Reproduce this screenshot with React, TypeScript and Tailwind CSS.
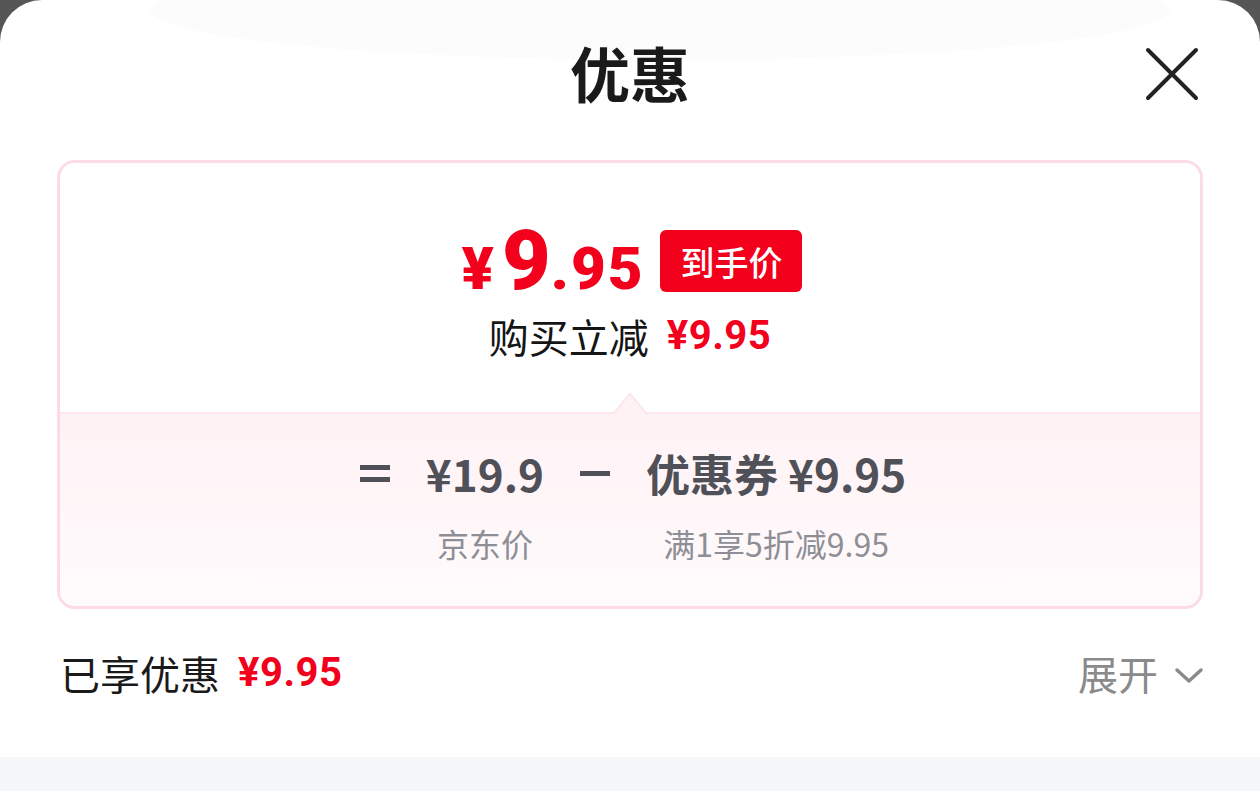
const cjk = "font-['Noto_Sans_CJK_SC','Noto_Sans',sans-serif]"
const num = "font-['Roboto','Noto_Sans_CJK_SC',sans-serif]"

function PriceHead() {
  return (
    <div className="flex flex-col items-center pt-[62px]">
      <div className="flex items-center gap-[16px] h-[72px] pl-[4px]">
        <div className={`flex items-baseline text-[#f2001c] font-black leading-none ${num}`}>
          <span className="text-[60px] mr-[8px]">¥</span>
          <span className="text-[84px]">9</span>
          <span className="text-[60px] tracking-[2px]">.95</span>
        </div>
        <div className="bg-[#f2001c] text-white rounded-[6px] h-[62px] w-[142px] flex items-center justify-center text-[34px] font-medium">
          到手价
        </div>
      </div>
      <div className="flex items-center gap-[18px] mt-[15px] h-[48px]">
        <span className="text-[40px] text-[#151515]">购买立减</span>
        <span className={`text-[40px] font-bold text-[#f2001c] tracking-[0.5px] ${num}`}>¥9.95</span>
      </div>
    </div>
  )
}

function Breakdown() {
  return (
    <div className="relative flex-1 border-t-2 border-[#fde6ec] bg-gradient-to-b from-[#fff2f5] to-[#fffbfc]">
      {/* notch */}
      <div className="absolute left-[553px] -top-[22px] w-0 h-0 border-l-[17px] border-r-[17px] border-b-[21px] border-l-transparent border-r-transparent border-b-[#fde6ec]" />
      <div className="absolute left-[555px] -top-[19px] w-0 h-0 border-l-[15px] border-r-[15px] border-b-[19px] border-l-transparent border-r-transparent border-b-[#fff2f5]" />
      <div className="flex justify-center pt-[32px] pl-[6px] text-[#4f5058]">
        <div className="flex items-start">
          <div className="w-[66px] h-[54px] flex items-center">
            <div className="w-[30px] flex flex-col gap-[7px]">
              <div className="h-[5px] bg-[#4f5058]" />
              <div className="h-[5px] bg-[#4f5058]" />
            </div>
          </div>
          <div className="flex flex-col items-center">
            <span className="text-[44px] font-semibold leading-[54px]">¥19.9</span>
            <span className="text-[32px] text-[#8e8f96] mt-[23px] leading-[40px]">京东价</span>
          </div>
          <div className="w-[102px] h-[54px] flex items-center justify-center">
            <div className="w-[30px] h-[5px] bg-[#4f5058]" />
          </div>
          <div className="flex flex-col items-center">
            <span className="text-[44px] font-semibold leading-[54px]">优惠券 ¥9.95</span>
            <span className="text-[32px] text-[#8e8f96] mt-[23px] leading-[40px]">满1享5折减9.95</span>
          </div>
        </div>
      </div>
    </div>
  )
}

export default function App() {
  return (
    <div className={`w-[1260px] h-[791px] bg-[#565656] ${cjk} overflow-hidden`}>
      <div className="relative h-full bg-white rounded-t-[42px] overflow-hidden flex flex-col">
        <div className="absolute left-[150px] right-[90px] -top-[40px] h-[100px] rounded-[50%] bg-[#fcfcfc]" />
        <div className="relative h-[160px] flex items-start justify-center pt-[33px]">
          <h1 className="text-[60px] font-bold text-[#1a1a1a] leading-[78px]">优惠</h1>
          <svg className="absolute right-[58px] top-[44px]" width="60" height="60" viewBox="0 0 60 60">
            <path d="M6 6 L54 54 M54 6 L6 54" stroke="#222" strokeWidth="4" strokeLinecap="round" />
          </svg>
        </div>
        <div className="mx-[57px] h-[449px] border-[3px] border-[#fddbe4] rounded-[18px] overflow-hidden flex flex-col">
          <div className="h-[249px] bg-white">
            <PriceHead />
          </div>
          <Breakdown />
        </div>
        <div className="flex items-center justify-between pl-[60px] pr-[56px] h-[148px] pb-[20px]">
          <div className="flex items-center gap-[18px]">
            <span className="text-[40px] text-[#1a1a1a]">已享优惠</span>
            <span className={`text-[40px] font-bold text-[#f2001c] tracking-[0.5px] ${num}`}>¥9.95</span>
          </div>
          <div className="flex items-center gap-[16px] text-[#8a8a8a]">
            <span className="text-[40px]">展开</span>
            <svg width="30" height="18" viewBox="0 0 30 18" className="mt-[6px]">
              <path d="M3 3 L15 14 L27 3" fill="none" stroke="#8a8a8a" strokeWidth="3.5" strokeLinecap="round" strokeLinejoin="round" />
            </svg>
          </div>
        </div>
        <div className="flex-1 bg-[#f6f7f9]" />
      </div>
    </div>
  )
}
